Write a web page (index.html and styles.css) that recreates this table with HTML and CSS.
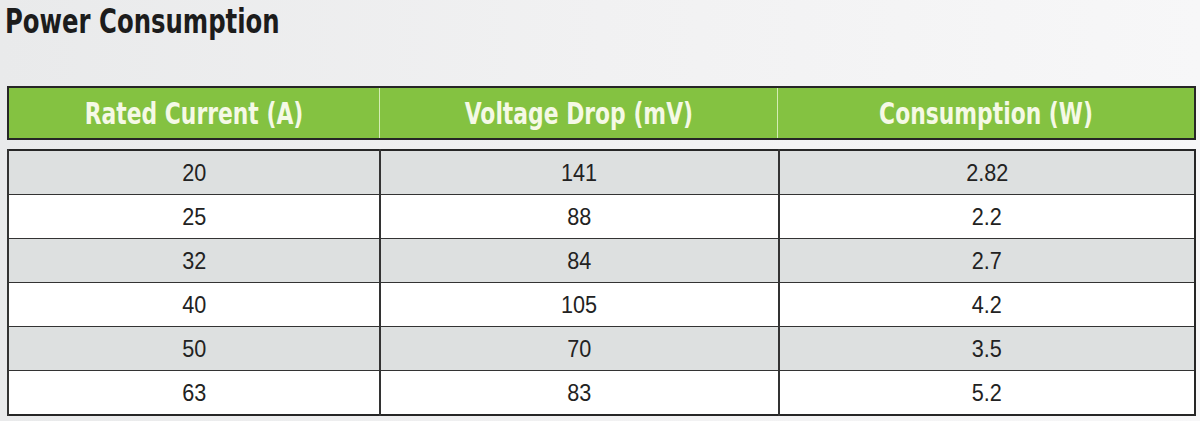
FILE: index.html
```html
<!DOCTYPE html>
<html>
<head>
     <title> Power Consumption </title>
     <link rel="stylesheet" href="styles.css">
</head>
<body>
     <h1 class="title"><span> Power Consumption </span></h1>

     <table class="head">
          <tr>
               <th class="c1"><span>Rated Current (A)</span></th>
               <th class="c2"><span>Voltage Drop (mV)</span></th>
               <th class="c3"><span>Consumption (W)</span></th>
          </tr>
     </table>

     <table class="data">
          <tr class="g">
               <td class="c1"><span>20</span></td>
               <td class="c2"><span>141</span></td>
               <td class="c3"><span>2.82</span></td>
          </tr>
          <tr>
               <td class="c1"><span>25</span></td>
               <td class="c2"><span>88</span></td>
               <td class="c3"><span>2.2</span></td>
          </tr>
          <tr class="g">
               <td class="c1"><span>32</span></td>
               <td class="c2"><span>84</span></td>
               <td class="c3"><span>2.7</span></td>
          </tr>
          <tr>
               <td class="c1"><span>40</span></td>
               <td class="c2"><span>105</span></td>
               <td class="c3"><span>4.2</span></td>
          </tr>
          <tr class="g">
               <td class="c1"><span>50</span></td>
               <td class="c2"><span>70</span></td>
               <td class="c3"><span>3.5</span></td>
          </tr>
          <tr>
               <td class="c1"><span>63</span></td>
               <td class="c2"><span>83</span></td>
               <td class="c3"><span>5.2</span></td>
          </tr>
     </table>
</body>
</html>
```

FILE: styles.css
```css
body {
     margin: 0;
     padding: 0 4px 0 7px;
     background: linear-gradient(to right, #e9eaeb, #f1f1f2 50%, #f7f7f8);
     height: 421px;
     overflow: hidden;
}

h1.title {
     font-family: "DejaVu Sans Condensed", "DejaVu Sans", sans-serif;
     font-weight: bold;
     font-size: 33px;
     line-height: 40px;
     color: #1c1c1c;
     margin: 0 0 0 -2px;
     padding-top: 2px;
     height: 86px;
     box-sizing: border-box;
     white-space: nowrap;
}

h1.title span {
     display: inline-block;
     transform: scaleX(0.82);
     transform-origin: left center;
}

table.head,
table.data {
     width: 1189px;
     border-collapse: collapse;
     table-layout: fixed;
}

.c1 {
     width: 370px;
}

.c2 {
     width: 397px;
}

table.head {
     border: 2px solid #262626;
     background-color: #84c241;
     margin-bottom: 9px;
}

table.head th {
     height: 50px;
     padding: 0;
     font-family: "DejaVu Sans Condensed", "DejaVu Sans", sans-serif;
     font-weight: bold;
     font-size: 30px;
     color: #f5f9e6;
     text-align: center;
     white-space: nowrap;
     border-left: 1px solid #d4ecb4;
}

table.head th span,
table.data td span {
     display: inline-block;
}

table.head th span {
     transform: scaleX(0.81);
}

table.head th.c1 {
     border-left: none;
}

table.data {
     border: 2px solid #262626;
     background-color: #ffffff;
}

table.data td {
     height: 43px;
     padding: 0;
     font-family: "Liberation Sans", Arial, sans-serif;
     font-size: 24px;
     color: #222;
     text-align: center;
     border: 1px solid #333;
     border-left-width: 2px;
}

table.data td span {
     transform: scaleX(0.9);
}

table.data tr.g {
     background-color: #dde0e0;
}
```
